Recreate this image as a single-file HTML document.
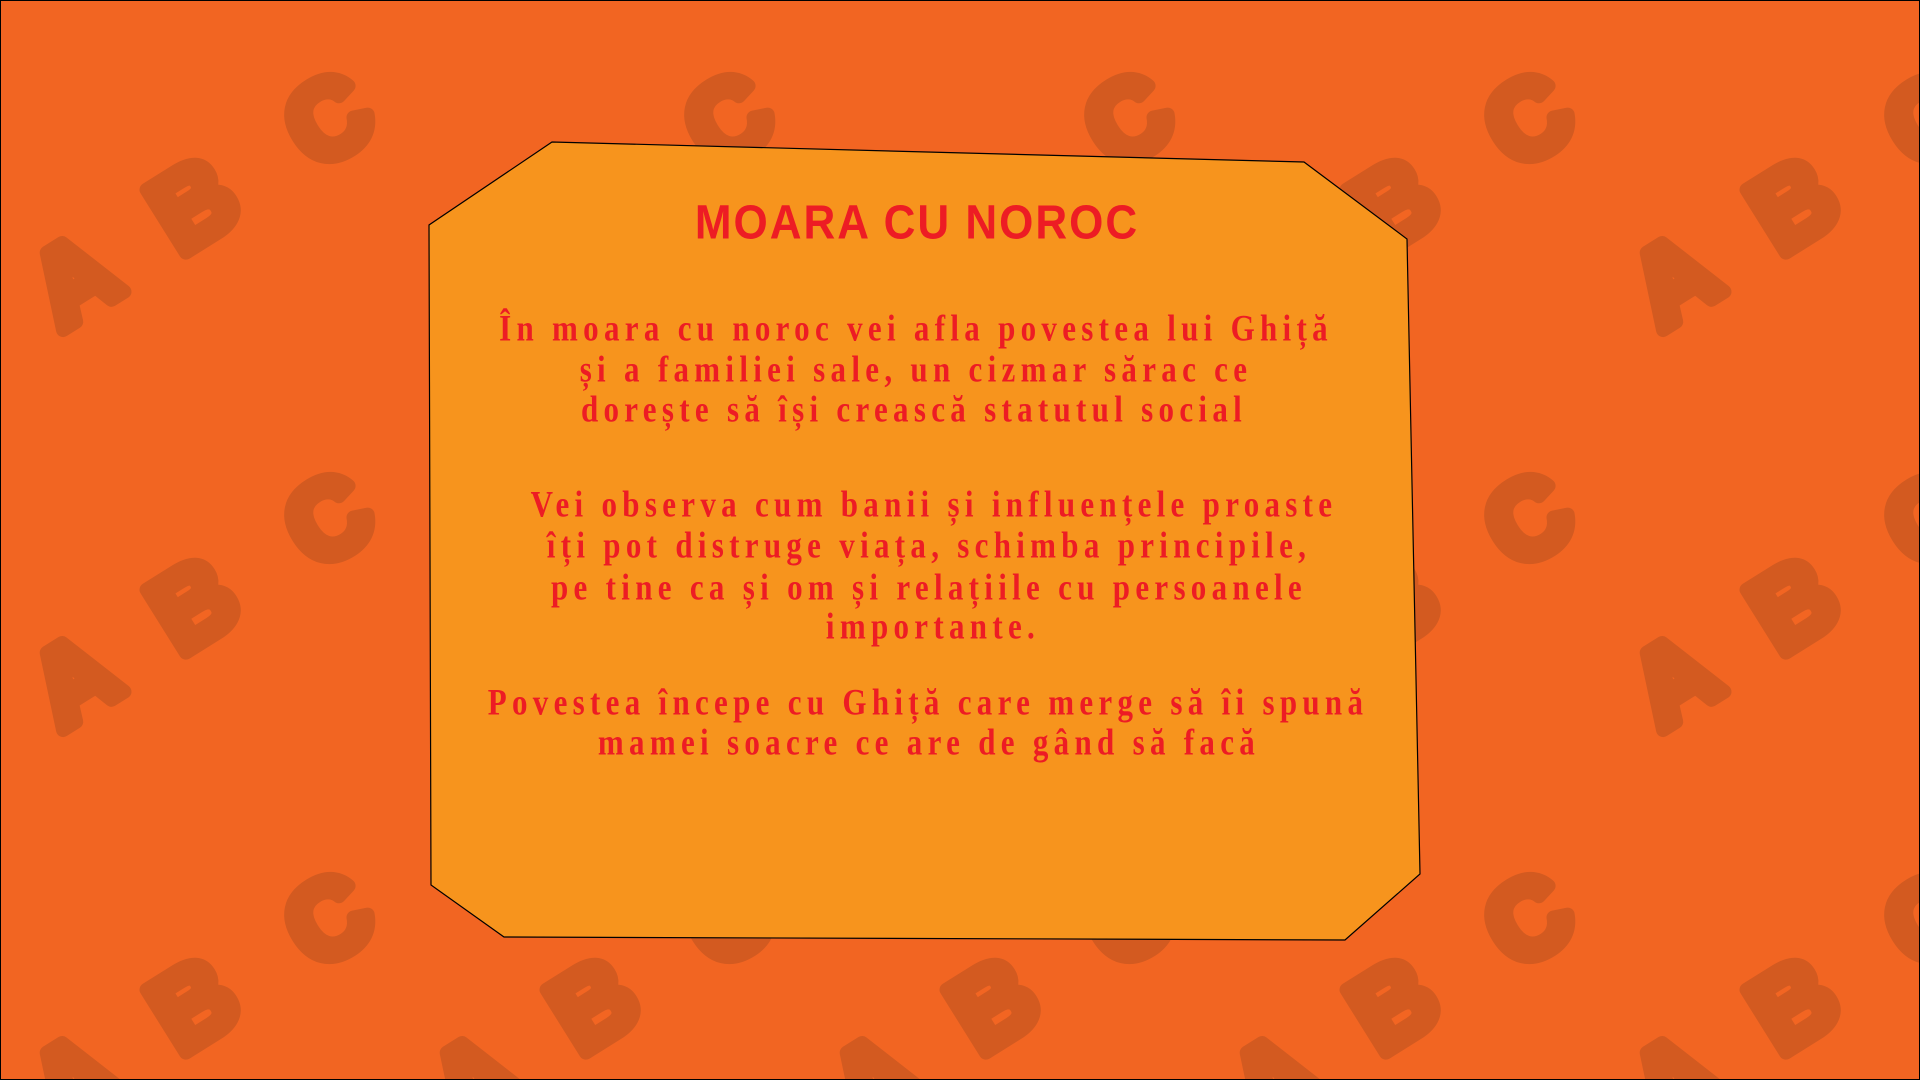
<!DOCTYPE html>
<html><head><meta charset="utf-8"><style>
html,body{margin:0;padding:0}
body{width:1920px;height:1080px;overflow:hidden;background:#F26522;position:relative;font-family:"Liberation Serif",serif}
.bg{position:absolute;left:0;top:0}
.t{position:absolute;left:0;width:0;white-space:nowrap;color:#ED1C24;font-weight:bold;font-size:31px;letter-spacing:5.3px;line-height:1}
.t span{position:absolute;transform:translate(-50%,-50%) scaleY(1.2);left:0;top:0}
.title span{font-family:"Liberation Sans",sans-serif;font-size:44px;letter-spacing:2px;transform:translate(-50%,-50%) scaleY(1.1)}
</style></head><body>
<svg class="bg" width="1920" height="1080" xmlns="http://www.w3.org/2000/svg">
<defs>
<pattern id="p" x="0" y="0" width="400" height="400" patternUnits="userSpaceOnUse">
<g fill="#D35A20" stroke="#D35A20" stroke-width="14" stroke-linejoin="round" font-family="Liberation Sans, sans-serif" font-weight="bold" font-size="108">
<text x="74" y="279" text-anchor="middle" dominant-baseline="central" transform="rotate(-32 74 279)">A</text>
<text x="193" y="204" text-anchor="middle" dominant-baseline="central" transform="rotate(-32 193 204)">B</text>
<text x="328" y="119" text-anchor="middle" dominant-baseline="central" transform="rotate(-32 328 119)">C</text>
</g>
</pattern>
</defs>
<rect width="1920" height="1080" fill="url(#p)"/>
<rect x="0.5" y="0.5" width="1919" height="1079" fill="none" stroke="#000" stroke-width="1"/>
<polygon points="552,142 1304,162 1407,239 1420,874 1345,940 504,937 431,885 429,225" fill="#F7941D" stroke="#000" stroke-width="1.2"/>
</svg>
<div class="t title" style="left:917px;top:223px"><span>MOARA CU NOROC</span></div>
<div class="t" style="left:916px;top:328px"><span>În moara cu noroc vei afla povestea lui Ghiță</span></div>
<div class="t" style="left:916px;top:369px"><span>și a familiei sale, un cizmar sărac ce</span></div>
<div class="t" style="left:914px;top:409px"><span>dorește să își crească statutul social</span></div>
<div class="t" style="left:934px;top:504px"><span>Vei observa cum banii și influențele proaste</span></div>
<div class="t" style="left:929px;top:545px"><span>îți pot distruge viața, schimba principile,</span></div>
<div class="t" style="left:929px;top:587px"><span>pe tine ca și om și relațiile cu persoanele</span></div>
<div class="t" style="left:933px;top:626px"><span>importante.</span></div>
<div class="t" style="left:928px;top:702px"><span>Povestea începe cu Ghiță care merge să îi spună</span></div>
<div class="t" style="left:929px;top:742px"><span>mamei soacre ce are de gând să facă</span></div>
</body></html>
